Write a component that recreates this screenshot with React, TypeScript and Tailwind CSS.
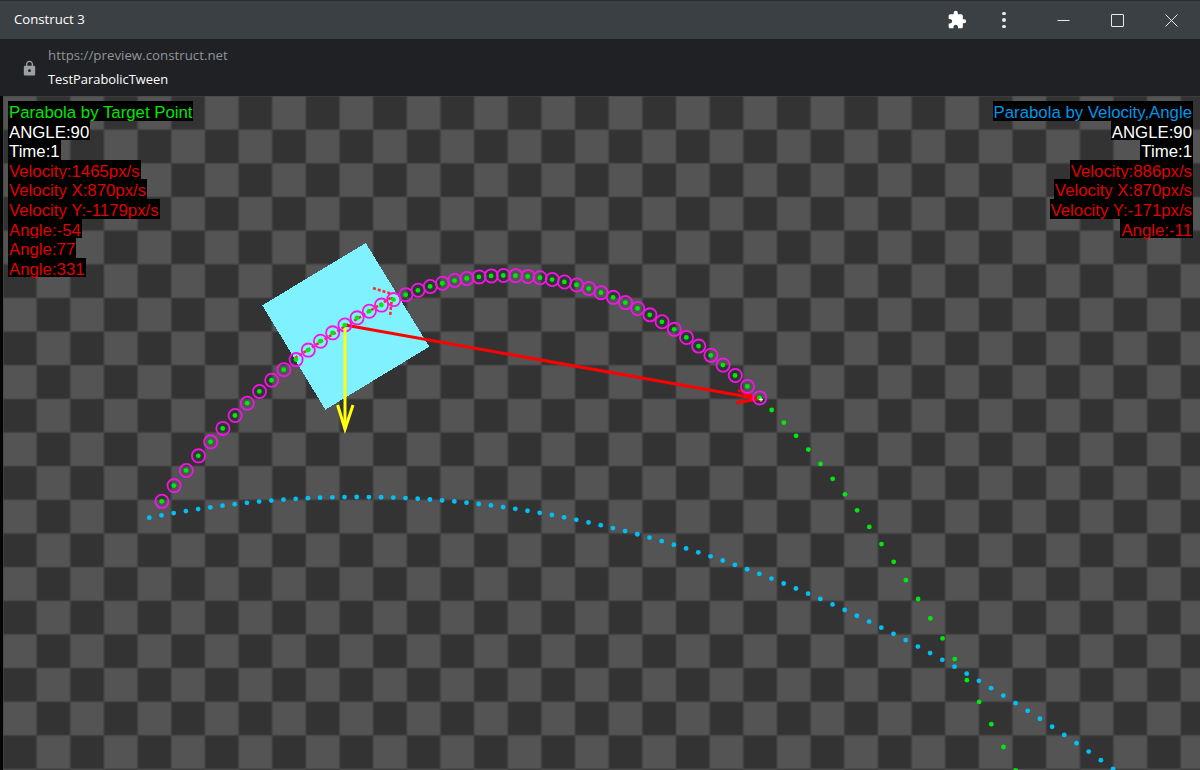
import { MdExtension, MdLock } from "react-icons/md";

const TILE = 33.65;
const STEP = 12.2;

const greenY = (x: number) => 275.5 + 0.001905 * (x - 506) * (x - 506);
const blueY = (x: number) => 497 + 0.0004763 * (x - 357.6) * (x - 357.6);

const green = Array.from({ length: 71 }, (_, i) => {
  const x = 161.7 + STEP * i;
  return { x, y: greenY(x) };
});
const blue = Array.from({ length: 80 }, (_, i) => {
  const x = 149.3 + STEP * i;
  return { x, y: blueY(x) };
});

const LEFT_LINES = [
  { text: "Parabola by Target Point", color: "text-[#00e600]" },
  { text: "ANGLE:90", color: "text-white" },
  { text: "Time:1", color: "text-white" },
  { text: "Velocity:1465px/s", color: "text-[#e00000]" },
  { text: "Velocity X:870px/s", color: "text-[#e00000]" },
  { text: "Velocity Y:-1179px/s", color: "text-[#e00000]" },
  { text: "Angle:-54", color: "text-[#e00000]" },
  { text: "Angle:77", color: "text-[#e00000]" },
  { text: "Angle:331", color: "text-[#e00000]" },
];

const RIGHT_LINES = [
  { text: "Parabola by Velocity,Angle", color: "text-[#0096e6]" },
  { text: "ANGLE:90", color: "text-white" },
  { text: "Time:1", color: "text-white" },
  { text: "Velocity:886px/s", color: "text-[#e00000]" },
  { text: "Velocity X:870px/s", color: "text-[#e00000]" },
  { text: "Velocity Y:-171px/s", color: "text-[#e00000]" },
  { text: "Angle:-11", color: "text-[#e00000]" },
];

function Labels({ lines, className }: { lines: typeof LEFT_LINES; className: string }) {
  return (
    <div className={`absolute top-[5px] flex flex-col font-['Liberation_Sans',Arial,sans-serif] text-[16.8px] leading-[24px] ${className}`}>
      {lines.map((l) => (
        <span key={l.text} className={`bg-black px-px h-[19.6px] whitespace-nowrap ${l.color}`}>
          {l.text}
        </span>
      ))}
    </div>
  );
}

function Scene() {
  return (
    <svg className="block w-[1200px] h-[674px]" viewBox="0 96 1200 674">
      <defs>
        <pattern id="checker" x={3} y={96} width={TILE * 2} height={TILE * 2} patternUnits="userSpaceOnUse">
          <rect width={TILE * 2} height={TILE * 2} fill="#333333" />
          <rect width={TILE} height={TILE} fill="#545454" />
          <rect x={TILE} y={TILE} width={TILE} height={TILE} fill="#545454" />
          <path
            d={`M0 0H${TILE * 2}M0 ${TILE}H${TILE * 2}M0 ${TILE * 2}H${TILE * 2}M0 0V${TILE * 2}M${TILE} 0V${TILE * 2}M${TILE * 2} 0V${TILE * 2}`}
            stroke="#444444"
            strokeWidth={1.2}
            fill="none"
          />
        </pattern>
      </defs>
      <rect x={0} y={96} width={1200} height={674} fill="url(#checker)" />
      <rect x={0} y={96} width={3} height={674} fill="#050505" />

      <polygon points="365.7,243 429.3,346.7 325.3,409.7 262.3,305.3" fill="#80f2ff" shapeRendering="crispEdges" />

      <g stroke="#ff2a2a" strokeWidth={2.6} fill="none" strokeDasharray="3 2">
        <path d="M295 358L392 297" />
        <path d="M373 288L392 294" />
        <path d="M392 297L390 317" />
      </g>

      <path d="M345 325L757 398.6" stroke="#ff0000" strokeWidth={3} fill="none" />
      <path d="M738 390L758 399L736 402.7" stroke="#ff0000" strokeWidth={3} fill="none" />

      {blue.map((p) => (
        <circle key={p.x} cx={p.x} cy={p.y} r={2.4} fill="#00c0f8" />
      ))}
      {green.slice(0, 50).map((p) => (
        <circle key={p.x} cx={p.x + 0.2} cy={p.y} r={6.6} fill="none" stroke="#f414e8" strokeWidth={1.8} />
      ))}
      {green.map((p) => (
        <circle key={p.x} cx={p.x} cy={p.y} r={2.4} fill="#00e810" />
      ))}

      <path d="M345 328V429" stroke="#ffff10" strokeWidth={3} fill="none" />
      <path d="M337.6 405L345 429L353 405" stroke="#ffff10" strokeWidth={3} fill="none" />
      <path d="M759 399.7H763M761 397.7V401.7" stroke="#ffffff" strokeWidth={1} />
    </svg>
  );
}

export default function App() {
  return (
    <div className="w-[1200px] h-[770px] overflow-hidden flex flex-col bg-[#202124] font-['Open_Sans',sans-serif]">
      <header className="h-[39px] shrink-0 flex items-center bg-[#3b4044] border-t border-[#2b2e31] text-[13.2px] text-white">
        <span className="ml-[14px] flex-1">Construct 3</span>
        <MdExtension className="w-[20px] h-[20px] text-white" />
        <div className="ml-[35px] w-[4px] flex flex-col gap-[3px]">
          <span className="w-[3.5px] h-[3.5px] rounded-full bg-[#e8eaed]" />
          <span className="w-[3.5px] h-[3.5px] rounded-full bg-[#e8eaed]" />
          <span className="w-[3.5px] h-[3.5px] rounded-full bg-[#e8eaed]" />
        </div>
        <div className="ml-[51px] flex items-center gap-[41px] pr-[22px]">
          <svg width="13" height="13" viewBox="0 0 13 13" className="text-[#e8eaed]">
            <path d="M0.5 6.5H12.5" stroke="currentColor" fill="none" />
          </svg>
          <svg width="13" height="13" viewBox="0 0 13 13" className="text-[#e8eaed]">
            <rect x="0.5" y="0.5" width="12" height="12" rx="0.5" stroke="currentColor" fill="none" />
          </svg>
          <svg width="13" height="13" viewBox="0 0 13 13" className="text-[#e8eaed]">
            <path d="M0.5 0.5L12.5 12.5M12.5 0.5L0.5 12.5" stroke="currentColor" fill="none" />
          </svg>
        </div>
      </header>

      <div className="h-[57px] shrink-0 flex items-center bg-[#202124]">
        <MdLock className="ml-[21px] w-[17px] h-[17px] mt-[2px] text-[#9aa0a6]" />
        <div className="ml-[10px] mb-[2px] flex flex-col leading-[24px]">
          <span className="text-[13.3px] text-[#8f9499]">https://preview.construct.net</span>
          <span className="text-[12.9px] text-white">TestParabolicTween</span>
        </div>
      </div>

      <main className="relative flex-1">
        <Scene />
        <Labels lines={LEFT_LINES} className="left-[8px] items-start" />
        <Labels lines={RIGHT_LINES} className="right-[7px] items-end" />
      </main>
    </div>
  );
}
